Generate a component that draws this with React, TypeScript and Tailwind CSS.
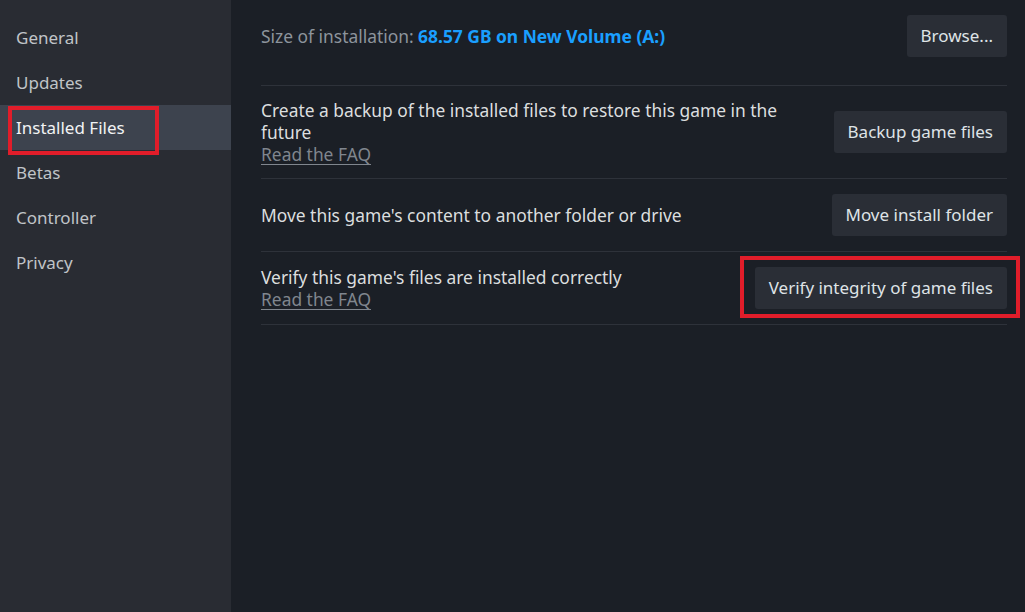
import React from "react";

const items = ["General", "Updates", "Installed Files", "Betas", "Controller", "Privacy"];

function Btn({ children }: { children: React.ReactNode }) {
  return (
    <button className="h-[42px] shrink-0 rounded-[3px] bg-[#2a2e36] px-[14px] text-[17px] text-[#dfe3e6]">
      {children}
    </button>
  );
}

function Faq() {
  return <div className="text-[#80868e] underline underline-offset-[3px] decoration-[1px]">Read the FAQ</div>;
}

export default function App() {
  return (
    <div
      className="flex h-[612px] w-[1025px] overflow-hidden bg-[#1b1f26] text-[17px] leading-[22px]"
      style={{ fontFamily: '"Noto Sans", "Open Sans", sans-serif' }}
    >
      <aside className="w-[231px] shrink-0 bg-[#292c33] pt-[15px]">
        {items.map((it) => {
          const sel = it === "Installed Files";
          return (
            <div
              key={it}
              className={
                "relative flex h-[45px] items-center px-[16px] " +
                (sel ? "bg-[#3d434e] text-[#f2f3f4]" : "text-[#c0c4c8]")
              }
            >
              {it}
              {sel && (
                <span className="pointer-events-none absolute left-[8px] top-[1px] h-[49px] w-[151px] border-4 border-[#e11d2a]" />
              )}
            </div>
          );
        })}
      </aside>
      <main className="flex-1 pl-[30px] pr-[18px] text-[17.4px]">
        <div className="flex items-center justify-between border-b border-[#2e323a] pt-[15px] pb-[28px]">
          <div className="text-[#8d949c]">
            Size of installation: <span className="font-bold text-[#1a9fff]">68.57 GB on New Volume (A:)</span>
          </div>
          <Btn>Browse...</Btn>
        </div>
        <div className="flex items-center justify-between border-b border-[#2e323a] py-[13px]">
          <div className="w-[535px] text-[#dcdedf]">
            <div>Create a backup of the installed files to restore this game in the future</div>
            <Faq />
          </div>
          <Btn>Backup game files</Btn>
        </div>
        <div className="flex items-center justify-between border-b border-[#2e323a] py-[15px]">
          <div className="text-[#dcdedf]">Move this game's content to another folder or drive</div>
          <Btn>Move install folder</Btn>
        </div>
        <div className="flex items-center justify-between border-b border-[#2e323a] py-[14px]">
          <div className="text-[#dcdedf]">
            <div>Verify this game's files are installed correctly</div>
            <Faq />
          </div>
          <div className="relative">
            <Btn>Verify integrity of game files</Btn>
            <span className="pointer-events-none absolute left-[-15px] top-[-11px] bottom-[-9px] right-[-13px] border-4 border-[#e11d2a]" />
          </div>
        </div>
      </main>
    </div>
  );
}
